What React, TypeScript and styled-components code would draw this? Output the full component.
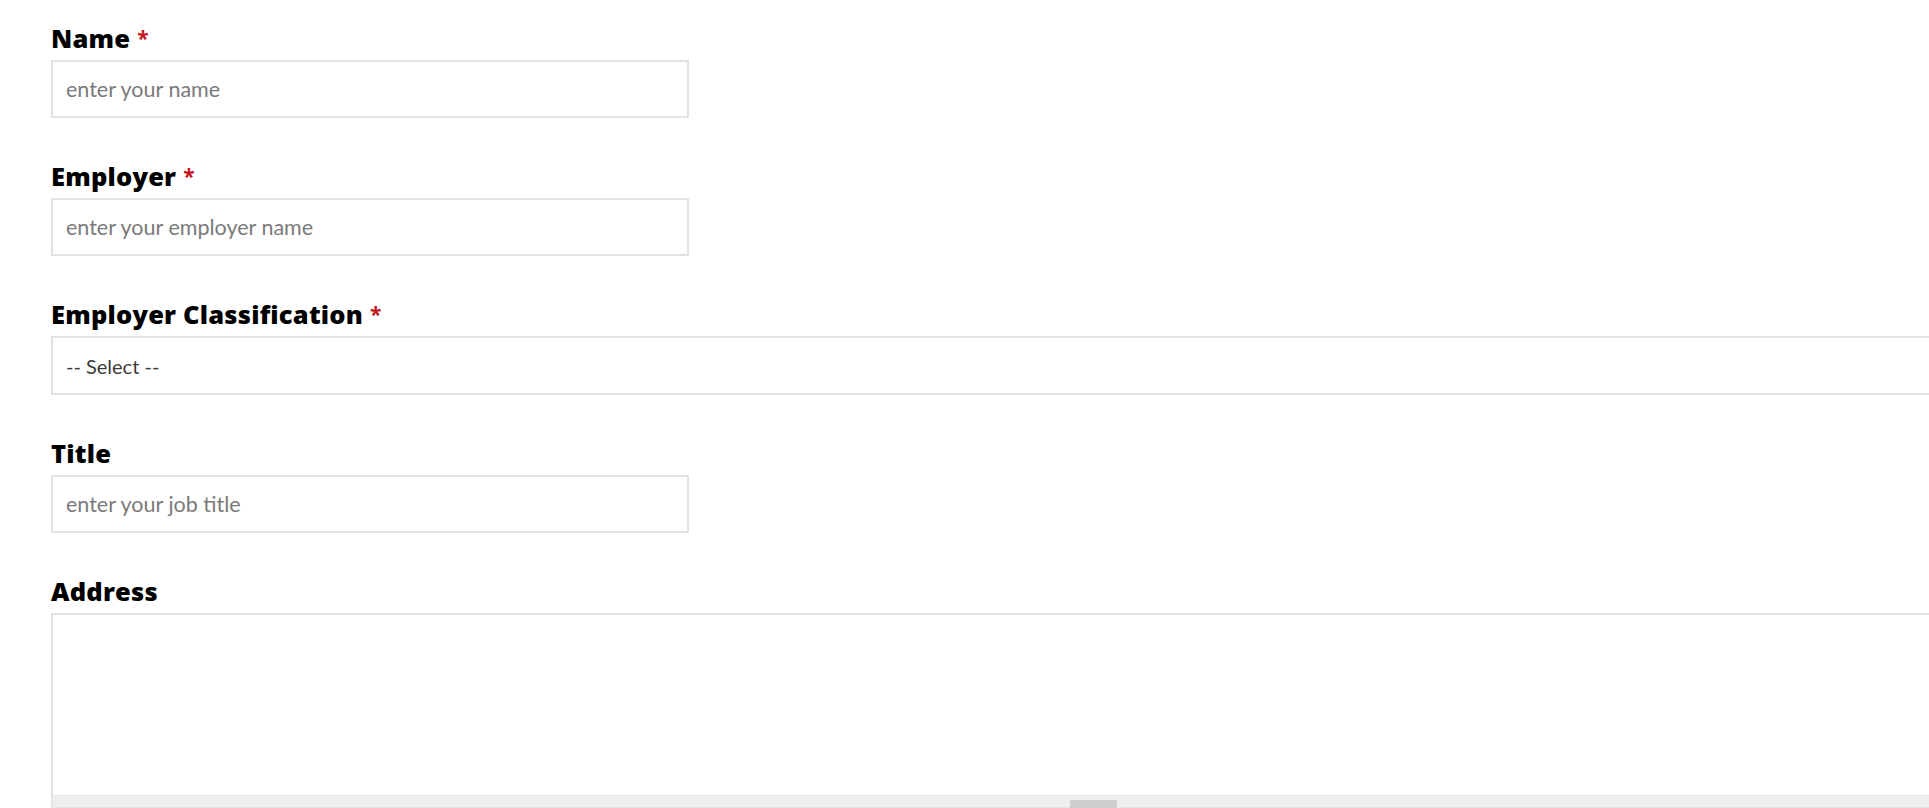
import styled, { createGlobalStyle } from 'styled-components';

const GlobalStyle = createGlobalStyle`
  html, body {
    margin: 0;
    padding: 0;
    background: #fff;
    overflow: hidden;
  }
  body {
    font-family: Lato, "Open Sans", sans-serif;
    color: #111;
  }
`;

const Form = styled.form`
  padding: 20px 0 0 51px;
  width: 2084px;
`;

const Field = styled.div`
  margin-bottom: 40px;
`;

const Label = styled.label`
  display: block;
  font-family: "Open Sans", Lato, sans-serif;
  font-size: 25.5px;
  font-weight: 800;
  letter-spacing: 0.2px;
  line-height: 37px;
  margin-bottom: 3px;
  color: #000;
`;

const Required = styled.span`
  color: #c4161c;
  margin-left: 7px;
  font-size: 21px;
  font-weight: 700;
  vertical-align: top;
`;

const TextInput = styled.input`
  display: block;
  box-sizing: border-box;
  width: 638px;
  height: 58px;
  padding: 0 13px;
  border: 2px solid #e2e2e2;
  border-radius: 0;
  font-family: Lato, "Open Sans", sans-serif;
  font-size: 21.5px;
  color: #333;
  outline: none;

  &::placeholder {
    color: #7a7a7a;
  }
`;

const Select = styled.select`
  display: block;
  box-sizing: border-box;
  width: 2084px;
  height: 59px;
  padding: 0 13px;
  border: 2px solid #e2e2e2;
  border-radius: 0;
  background: #fff;
  appearance: none;
  font-family: Lato, "Open Sans", sans-serif;
  font-size: 20px;
  color: #3a3a3a;
  outline: none;
`;

const TextareaWrap = styled.div`
  width: 2084px;
`;

const TextArea = styled.textarea`
  display: block;
  box-sizing: border-box;
  width: 100%;
  height: 182px;
  margin: 0;
  padding: 10px 13px;
  border: 2px solid #e2e2e2;
  border-bottom: 0;
  border-radius: 0;
  resize: none;
  font-family: Lato, "Open Sans", sans-serif;
  font-size: 20px;
  outline: none;
`;

const Grippie = styled.div`
  box-sizing: border-box;
  height: 14px;
  background: #eeeeee;
  border: 2px solid #e2e2e2;
  border-top: 1px solid #e4e4e4;
  display: flex;
  justify-content: center;
  padding-top: 4px;
`;

const Grip = styled.span`
  display: block;
  width: 47px;
  height: 8px;
  background: #cfcfcf;
`;

export default function App() {
  return (
    <>
      <GlobalStyle />
      <Form>
        <Field>
          <Label>
            Name<Required>*</Required>
          </Label>
          <TextInput placeholder="enter your name" />
        </Field>
        <Field>
          <Label>
            Employer<Required>*</Required>
          </Label>
          <TextInput placeholder="enter your employer name" />
        </Field>
        <Field>
          <Label>
            Employer Classification<Required>*</Required>
          </Label>
          <Select defaultValue="">
            <option value="">-- Select --</option>
          </Select>
        </Field>
        <Field>
          <Label>Title</Label>
          <TextInput placeholder="enter your job title" />
        </Field>
        <Field>
          <Label>Address</Label>
          <TextareaWrap>
            <TextArea />
            <Grippie>
              <Grip />
            </Grippie>
          </TextareaWrap>
        </Field>
      </Form>
    </>
  );
}
